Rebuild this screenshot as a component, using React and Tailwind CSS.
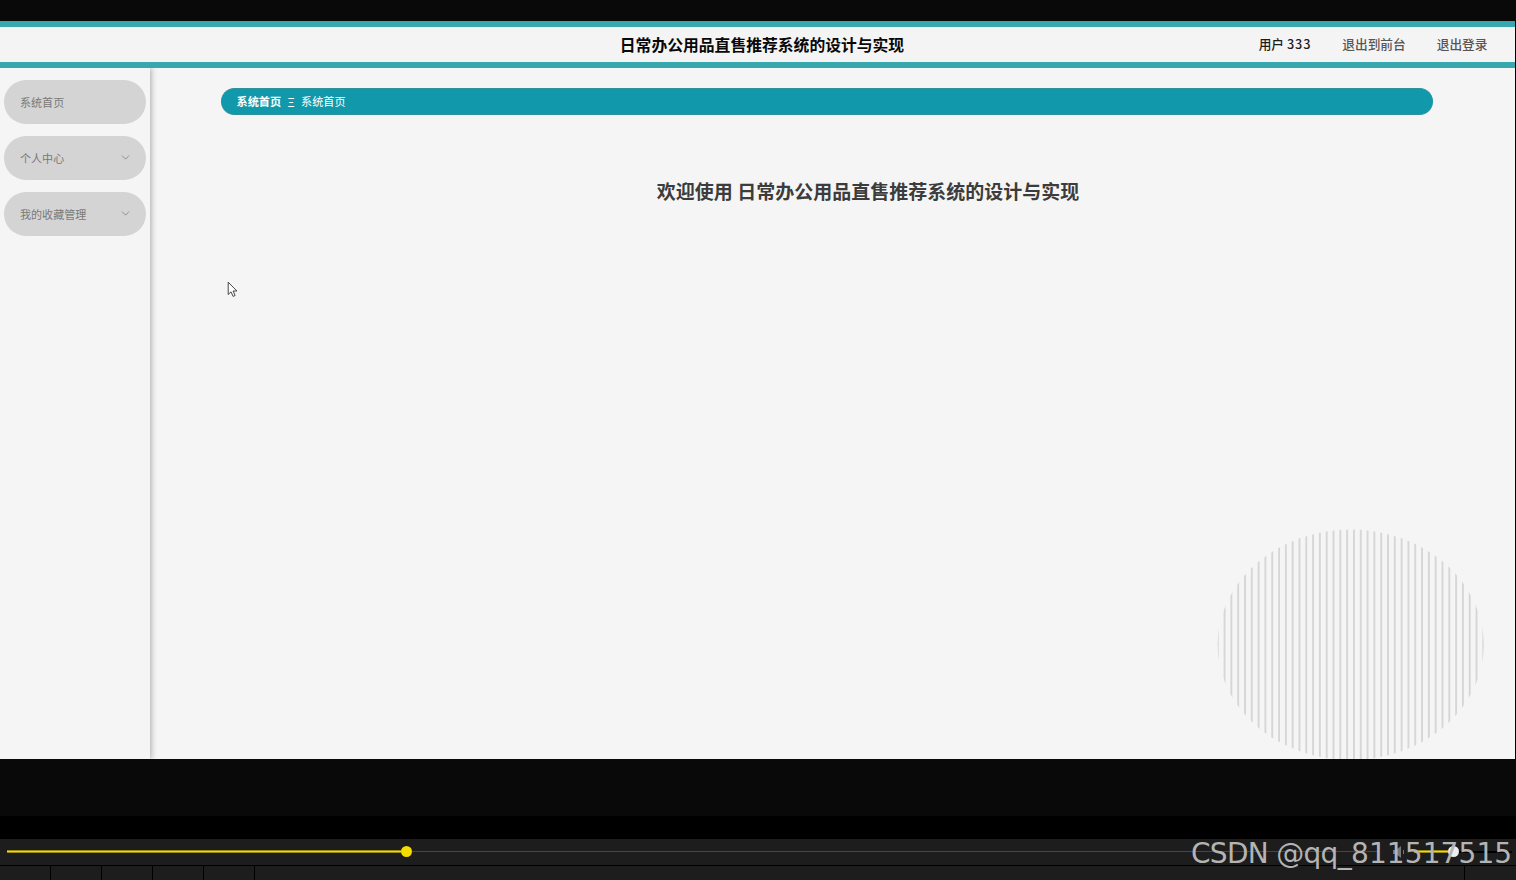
import { ChevronDown } from 'lucide-react'

const menu = [
  { id: 'home', label: '系统首页', children: false },
  { id: 'profile', label: '个人中心', children: true },
  { id: 'favorites', label: '我的收藏管理', children: true },
]

const stripes = Array.from({ length: 40 }, (_, i) => 0.7 + i * 6.81)

function Header() {
  return (
    <header className="relative z-20 grid h-[47px] shrink-0 grid-cols-[1fr_auto_1fr] items-center border-y-[6px] border-[#36a8ae] bg-[#f5f4f4]">
      <div />
      <h1 className="relative left-[4.5px] text-[15.8px] leading-none font-bold text-[#080808]">
        日常办公用品直售推荐系统的设计与实现
      </h1>
      <div className="flex items-center justify-end pr-[27.5px] text-[12.7px] leading-none font-medium text-[#555]">
        <span className="mr-[31px] whitespace-pre text-[#1c1c1c]">用户 <span className="tracking-[0.9px]">333</span></span>
        <span className="mr-[31px]">退出到前台</span>
        <span>退出登录</span>
      </div>
    </header>
  )
}

function Sidebar() {
  return (
    <aside className="z-10 flex w-[150px] shrink-0 flex-col gap-3 bg-[#f5f5f5] px-1 pt-3 shadow-[1px_0_6px_rgba(0,0,0,0.32)]">
      {menu.map(item => (
        <div
          key={item.id}
          className="flex h-11 items-center justify-between rounded-full bg-[#d4d4d4] pr-[14px] pl-4 text-[11.05px] leading-none text-[#797979]"
        >
          <span className="pt-[2px]">{item.label}</span>
          {item.children && <ChevronDown size={13} strokeWidth={1.4} className="mb-[2px]" />}
        </div>
      ))}
    </aside>
  )
}

function StripedCircle() {
  return (
    <svg className="absolute right-[30px] bottom-0 h-[230px] w-[268px]" viewBox="0 0 268 230">
      <defs>
        <clipPath id="oval">
          <ellipse cx="133.7" cy="115.8" rx="133.1" ry="115.2" />
        </clipPath>
      </defs>
      <g clipPath="url(#oval)" fill="#d6d6d6">
        {stripes.map(x => (
          <rect key={x} x={x - 0.9} y="0" width="1.9" height="230" />
        ))}
      </g>
    </svg>
  )
}

function Cursor() {
  return (
    <svg className="absolute top-[213px] left-[77px] h-[17px] w-3" viewBox="0 0 12 17">
      <path
        d="M1.2 1.2v12.3l2.8-2.7 2.1 4.6 2-.9-2-4.5h3.8z"
        fill="#fff"
        stroke="#444"
        strokeWidth="1"
      />
    </svg>
  )
}

function Player() {
  return (
    <div className="relative h-[41px] shrink-0 bg-[#1d1d1d]">
      <div className="flex h-[26px] items-center pr-1 pb-px pl-[7px]">
        <div className="h-[3px] w-[394px] border-y border-[#9a8b0c] bg-[#f5dc00]" />
        <div className="h-[11px] w-[11px] rounded-full bg-[#f5dc00]" />
        <div className="h-px w-[967px] bg-[#454545]" />
        <svg className="ml-[14px] h-3 w-4" viewBox="0 0 16 12" fill="#777">
          <path d="M0 4h3l5-4v12L3 8H0z" />
          <path d="M10 4h1v4h-1z" />
        </svg>
        <div className="ml-[5px] h-[3px] w-[34px] border-y border-[#9a8b0c] bg-[#f5dc00]" />
        <div className="h-[11px] w-[11px] rounded-full bg-[#eee]" />
        <div className="h-[2px] flex-1 bg-black" />
      </div>
      <div className="flex h-[15px] border-t border-black">
        {[0, 1, 2, 3, 4].map(n => (
          <div key={n} className="w-[51px] border-r border-black" />
        ))}
        <div className="flex-1 border-r border-black" />
        <div className="w-[51px]" />
      </div>
      <span className="absolute top-[-1px] left-[1191px] font-['DejaVu_Sans',sans-serif] text-[28px] leading-[32px] tracking-[-0.7px] whitespace-nowrap text-[#b4b4b4]">
        CSDN @qq_<span className="tracking-[0.1px]">811517515</span>
      </span>
    </div>
  )
}

export default function App() {
  return (
    <div className="flex h-[880px] w-[1516px] flex-col overflow-hidden bg-black font-['Noto_Sans_CJK_SC',sans-serif]">
      <div className="h-[21px] shrink-0 bg-[#090909]" />
      <div className="mr-px flex h-[738px] shrink-0 flex-col overflow-hidden">
        <Header />
        <div className="flex flex-1 bg-[#f5f5f5]">
          <Sidebar />
          <main className="relative flex-1 pt-5 pr-[82px] pl-[71px]">
            <nav className="flex h-[27px] items-center rounded-full border-y border-[#2f929d] bg-[#1199ab] pl-[15.5px] text-[11.15px] leading-none text-white">
              <b>系统首页</b>
              <span className="mx-[5px] w-[10px] text-center text-[12px]">Ξ</span>
              <span>系统首页</span>
            </nav>
            <h2 className="mt-[66px] ml-[82px] text-center text-[19px] leading-5 font-bold text-[#3c3c3c]">
              欢迎使用 日常办公用品直售推荐系统的设计与实现
            </h2>
            <StripedCircle />
            <Cursor />
          </main>
        </div>
      </div>
      <div className="h-[57px] shrink-0 bg-[#090909]" />
      <div className="h-[23px] shrink-0 bg-black" />
      <Player />
    </div>
  )
}
